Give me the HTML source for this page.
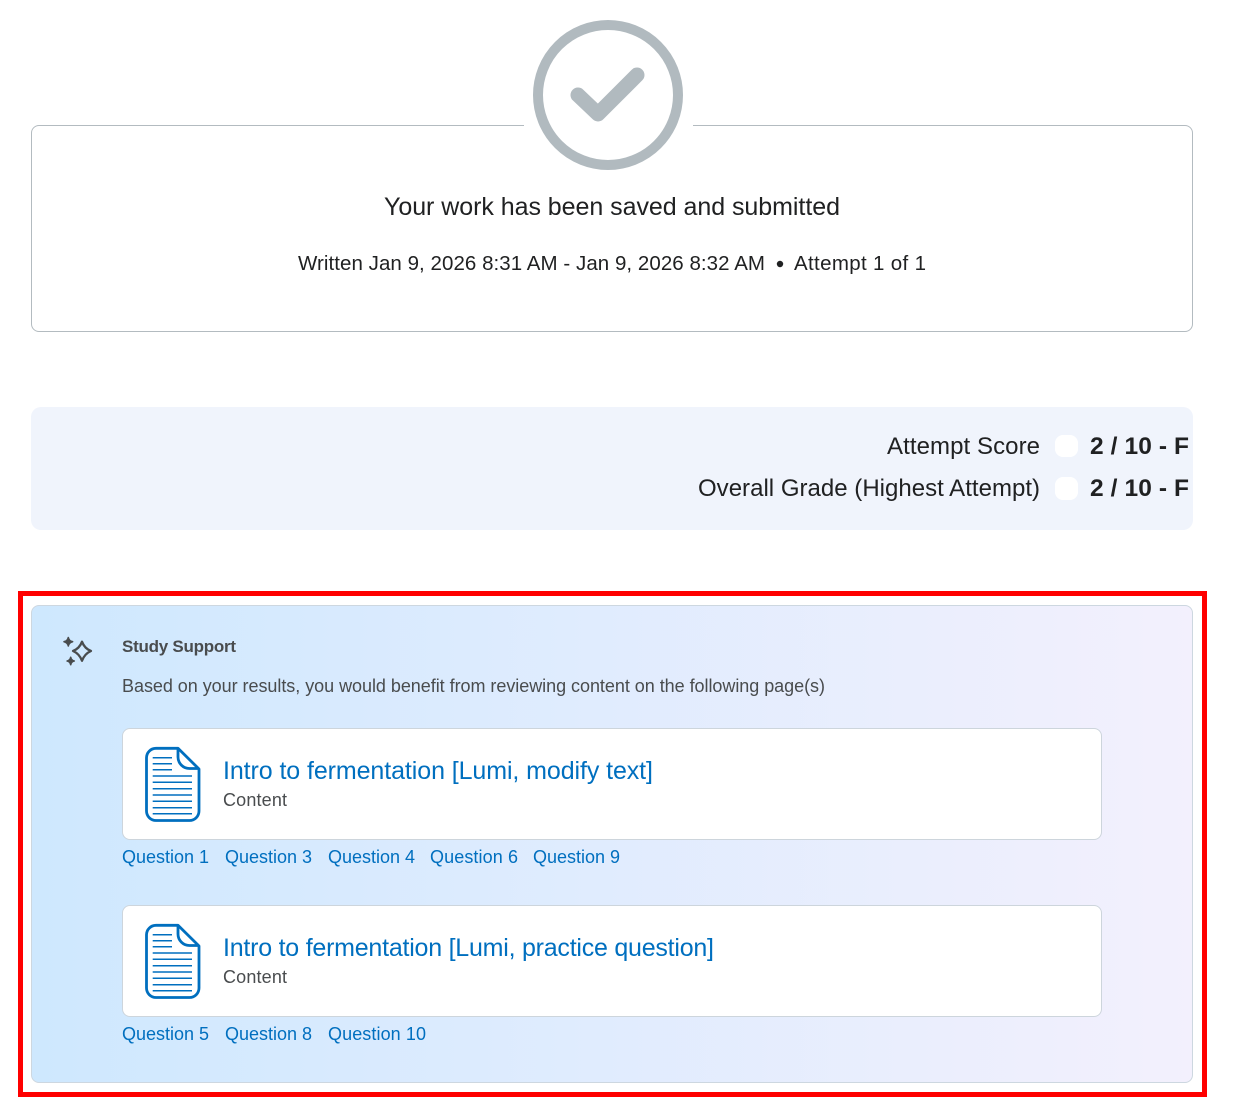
<!DOCTYPE html>
<html lang="en">
<head>
<meta charset="utf-8">
<title>Quiz submission</title>
<style>
html,body{margin:0;padding:0;background:#fff}
body{position:relative;width:1234px;height:1120px;overflow:hidden;font-family:"Liberation Sans",sans-serif}
.abs{position:absolute;box-sizing:border-box}
#card{left:31px;top:125px;width:1162px;height:207px;border:1px solid #b3bbc0;border-radius:8px}
#gap{left:524px;top:120px;width:169px;height:12px;background:#fff}
#score{left:31px;top:407px;width:1162px;height:123px;background:#f0f4fc;border-radius:10px}
.chip{background:#fff;border-radius:8px;left:1055px;width:23px}
#red{left:18px;top:591px;width:1189px;height:506px;border:5px solid #f00}
#panel{left:31px;top:605px;width:1162px;height:478px;border:1px solid #cdd7e0;border-radius:8px;background:linear-gradient(90deg,#cee8fe 0%,#f3f0fd 100%)}
.res{left:122px;width:980px;height:112px;background:#fff;border:1px solid #cdd5dc;border-radius:8px}
svg{position:absolute;left:0;top:0}
text{font-family:"Liberation Sans",sans-serif;white-space:pre}
.d{fill:#202122}
.g{fill:#494c4e}
.l{fill:#006fbf}
</style>
</head>
<body>
<div class="abs" id="card"></div>
<div class="abs" id="gap"></div>
<div class="abs" id="score"></div>
<div class="abs chip" style="top:435px;height:22px"></div>
<div class="abs chip" style="top:477px;height:23px"></div>
<div class="abs" id="red"></div>
<div class="abs" id="panel"></div>
<div class="abs res" style="top:728px"></div>
<div class="abs res" style="top:905px"></div>

<svg width="1234" height="1120" viewBox="0 0 1234 1120" xmlns="http://www.w3.org/2000/svg">
  <defs>
    <g id="doc" fill="none" stroke="#006fbf">
      <path stroke-width="2.800" stroke-linejoin="round" d="M178 748.300H156a9.500 9.500 0 0 0-9.500 9.500V811a9.500 9.500 0 0 0 9.500 9.500H189.500a9.500 9.500 0 0 0 9.500-9.500V769L178 748.300Z"/>
      <path stroke-width="2.800" stroke-linejoin="round" d="M178 748.300V757a11.500 11.500 0 0 0 11.500 11.500H199"/>
      <path stroke-width="1.500" d="M152.700 757.700H172M152.700 763.700H172M152.700 769.700H172M152.700 776H192M152.700 782.300H192M152.700 788.700H192M152.700 795H192M152.700 801.300H192M152.700 807.700H192M152.700 813.700H192"/>
    </g>
  </defs>

  <circle cx="608" cy="95" r="70" fill="#fff" stroke="#b1babf" stroke-width="10"/>
  <path d="M578 95L598 114L637 75" fill="none" stroke="#b1babf" stroke-width="15" stroke-linecap="round" stroke-linejoin="round"/>

  <text class="d" x="384" y="215" font-size="25" textLength="456">Your work has been saved and submitted</text>
  <text class="d" x="298" y="270" font-size="20.500" textLength="467">Written Jan 9, 2026 8:31 AM - Jan 9, 2026 8:32 AM</text>
  <circle cx="780" cy="264" r="3.200" fill="#202122"/>
  <text class="d" x="794" y="270" font-size="20.500" textLength="132">Attempt 1 of 1</text>

  <text class="d" x="887" y="454" font-size="24" textLength="153">Attempt Score</text>
  <text class="d" x="698" y="496" font-size="24" textLength="342">Overall Grade (Highest Attempt)</text>
  <text class="d" x="1090" y="454" font-size="24.500" font-weight="700" textLength="99">2 / 10 - F</text>
  <text class="d" x="1090" y="496" font-size="24.500" font-weight="700" textLength="99">2 / 10 - F</text>

  <g fill="#494c4e" stroke="#494c4e" stroke-width="1.600" stroke-linejoin="round">
    <path d="M68.300 637.500Q69 641 72.600 641.700Q69 642.400 68.300 646Q67.600 642.400 64 641.700Q67.600 641 68.300 637.500Z"/>
    <path d="M70.700 657.300Q71.300 660.400 74.300 661Q71.300 661.600 70.700 664.700Q70.100 661.600 67.100 661Q70.100 660.400 70.700 657.300Z"/>
  </g>
  <path d="M82 641.700Q84.500 648.500 91 651Q84.500 653.800 82 660.800Q79.500 653.800 73 651Q79.500 648.500 82 641.700Z" fill="none" stroke="#494c4e" stroke-width="2.300" stroke-linejoin="round"/>

  <text class="g" x="122" y="652" font-size="17" font-weight="700" textLength="114">Study Support</text>
  <text class="g" x="122" y="692" font-size="18" textLength="703">Based on your results, you would benefit from reviewing content on the following page(s)</text>

  <use href="#doc"/>
  <text class="l" x="223" y="779" font-size="25" textLength="430">Intro to fermentation [Lumi, modify text]</text>
  <text class="g" x="223" y="806" font-size="18" textLength="64">Content</text>
  <text class="l" x="122" y="863" font-size="18" textLength="87">Question 1</text>
  <text class="l" x="225" y="863" font-size="18" textLength="87">Question 3</text>
  <text class="l" x="328" y="863" font-size="18" textLength="87">Question 4</text>
  <text class="l" x="430" y="863" font-size="18" textLength="88">Question 6</text>
  <text class="l" x="533" y="863" font-size="18" textLength="87">Question 9</text>

  <use href="#doc" y="177"/>
  <text class="l" x="223" y="956" font-size="25" textLength="491">Intro to fermentation [Lumi, practice question]</text>
  <text class="g" x="223" y="983" font-size="18" textLength="64">Content</text>
  <text class="l" x="122" y="1040" font-size="18" textLength="87">Question 5</text>
  <text class="l" x="225" y="1040" font-size="18" textLength="87">Question 8</text>
  <text class="l" x="328" y="1040" font-size="18" textLength="98">Question 10</text>
</svg>
</body>
</html>
